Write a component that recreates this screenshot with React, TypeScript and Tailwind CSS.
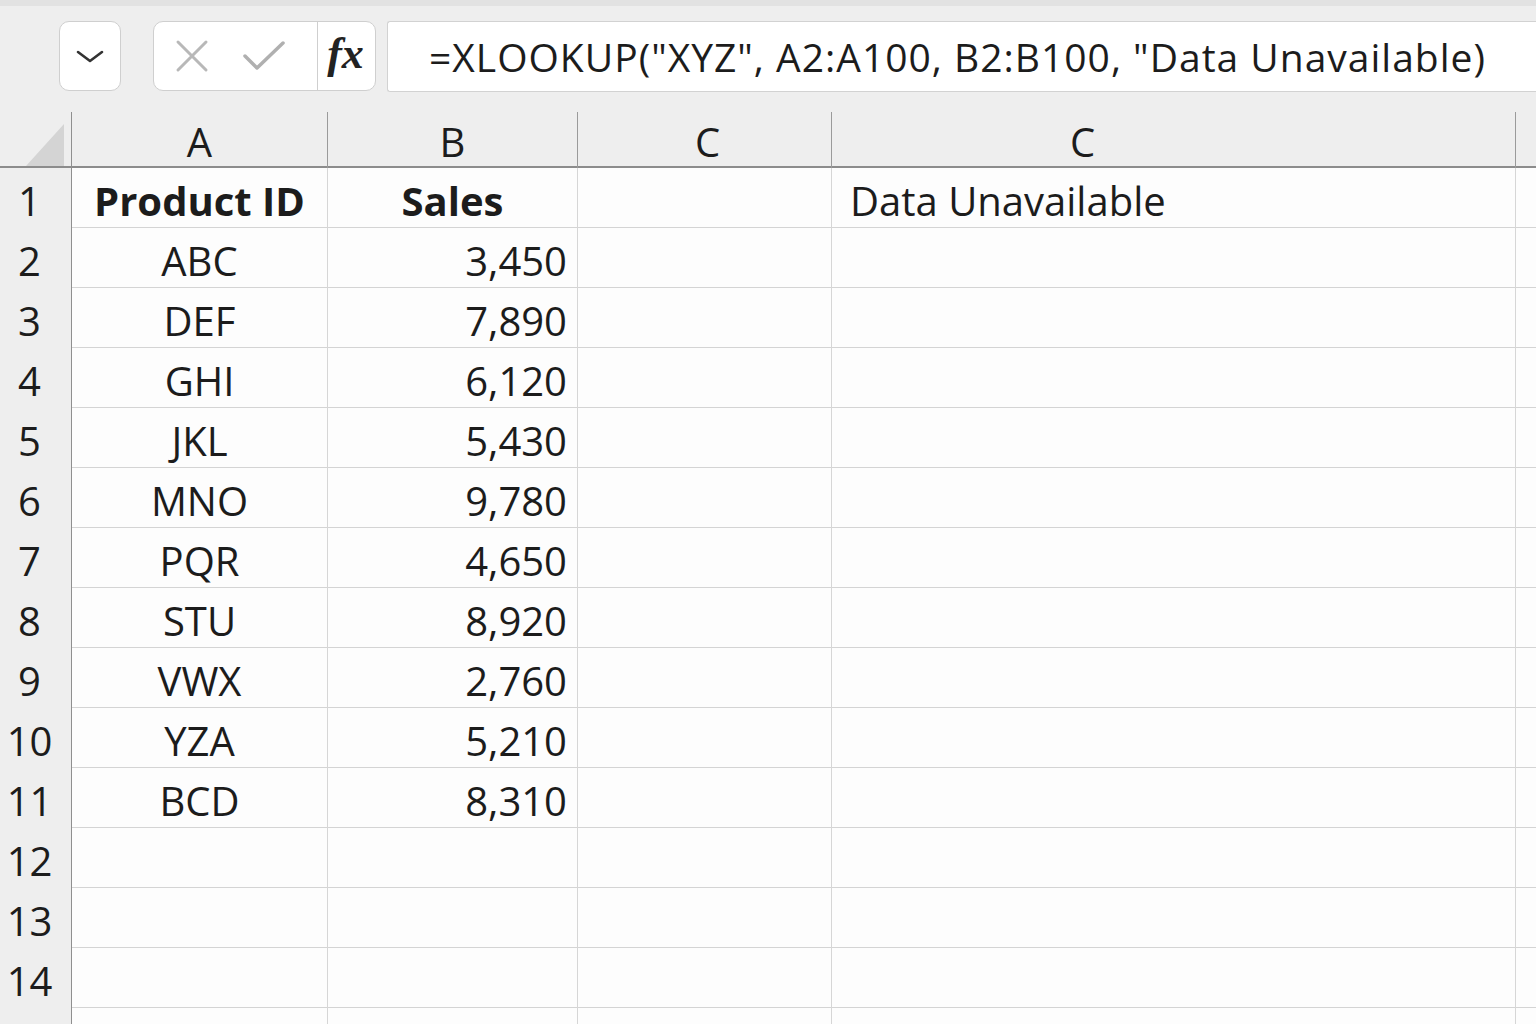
import React from 'react'

const rows: [string, string][] = [
  ['ABC', '3,450'],
  ['DEF', '7,890'],
  ['GHI', '6,120'],
  ['JKL', '5,430'],
  ['MNO', '9,780'],
  ['PQR', '4,650'],
  ['STU', '8,920'],
  ['VWX', '2,760'],
  ['YZA', '5,210'],
  ['BCD', '8,310'],
  ['', ''],
  ['', ''],
  ['', ''],
  ['', ''],
]

const cols = 'grid grid-cols-[72px_256px_250px_254px_684px_1fr]'

function Toolbar() {
  return (
    <div className="h-[106px] flex items-start pt-[15px]">
      <div className="ml-[59px] w-[62px] h-[70px] rounded-[10px] border border-[#cfcfcf] bg-white flex items-center justify-center">
        <svg width="30" height="18" viewBox="0 0 30 18">
          <path d="M3 5 L15 14 L27 5" fill="none" stroke="#333" strokeWidth="2.6" strokeLinecap="round" strokeLinejoin="round" />
        </svg>
      </div>
      <div className="ml-[32px] w-[223px] h-[70px] rounded-[10px] border border-[#cfcfcf] bg-white flex">
        <div className="w-[164px] flex items-center border-r border-[#cfcfcf]">
          <svg className="ml-[20px]" width="36" height="36" viewBox="0 0 36 36">
            <path d="M4 4 L32 32 M32 4 L4 32" stroke="#b8b8b8" strokeWidth="3" strokeLinecap="round" />
          </svg>
          <svg className="ml-[32px]" width="44" height="34" viewBox="0 0 44 34">
            <path d="M3 17 L15 29 L41 4" fill="none" stroke="#b0b0b0" strokeWidth="3.5" strokeLinecap="round" strokeLinejoin="round" />
          </svg>
        </div>
        <div className="flex-1 flex items-center justify-center font-['Liberation_Serif',serif] italic font-semibold text-[44px] text-[#222] leading-none pb-[4px] pr-[2px]">
          fx
        </div>
      </div>
      <div className="ml-[11px] flex-1 h-[71px] border-y border-l border-[#d2d2d2] rounded-l-[3px] bg-white flex items-center pl-[41px] pt-[2px] text-[39px] text-[#1c1c1c] tracking-[1px] whitespace-nowrap">
        =XLOOKUP("XYZ", A2:A100, B2:B100, "Data Unavailable)
      </div>
    </div>
  )
}

function HeaderRow() {
  return (
    <div className={`${cols} h-[56px] border-b-2 border-[#8c8c8c] text-[40px] text-[#1c1c1c]`}>
      <div className="border-r border-[#8f8f8f] flex items-end justify-end pr-[5px] pb-[4px]">
        <svg width="42" height="44" viewBox="0 0 42 44">
          <path d="M40 0 L40 42 L2 42 Z" fill="#d4d4d4" />
        </svg>
      </div>
      <div className="border-r border-[#9a9a9a] flex items-center justify-center">A</div>
      <div className="border-r border-[#9a9a9a] flex items-center justify-center">B</div>
      <div className="border-r border-[#9a9a9a] flex items-center justify-center pl-[6px]">C</div>
      <div className="border-r border-[#9a9a9a] flex items-center pl-[238px]">C</div>
      <div />
    </div>
  )
}

function Row({ n, id, sales }: { n: number; id: string; sales: string }) {
  const bold = n === 1
  return (
    <div className={`${cols} h-[60px] text-[40px] text-[#1c1c1c] bg-[#fdfdfd] border-b border-solid border-[#d4d4d4]`}>
      <div className="bg-[#eeeeee] border-r border-[#8f8f8f] flex items-center justify-center pr-[12px] pt-[3px]">
        {n <= 14 ? n : ''}
      </div>
      <div className={`border-r border-[#d6d6d6] flex items-center justify-center pt-[3px] ${bold ? 'font-bold' : ''}`}>
        {id}
      </div>
      <div className={`border-r border-[#d6d6d6] flex items-center pt-[3px] ${bold ? 'justify-center font-bold' : 'justify-end pr-[10px]'}`}>
        {sales}
      </div>
      <div className="border-r border-[#d6d6d6]" />
      <div className="border-r border-[#d6d6d6] flex items-center pl-[18px] pt-[3px]">
        {n === 1 ? 'Data Unavailable' : ''}
      </div>
      <div />
    </div>
  )
}

export default function App() {
  return (
    <div className="w-[1536px] h-[1024px] overflow-hidden bg-[#eeeeee] font-['Open_Sans',sans-serif]">
      <div className="h-[6px] bg-[#e2e2e2]" />
      <Toolbar />
      <HeaderRow />
      <Row n={1} id="Product ID" sales="Sales" />
      {rows.map((r, i) => (
        <Row key={i} n={i + 2} id={r[0]} sales={r[1]} />
      ))}
    </div>
  )
}
